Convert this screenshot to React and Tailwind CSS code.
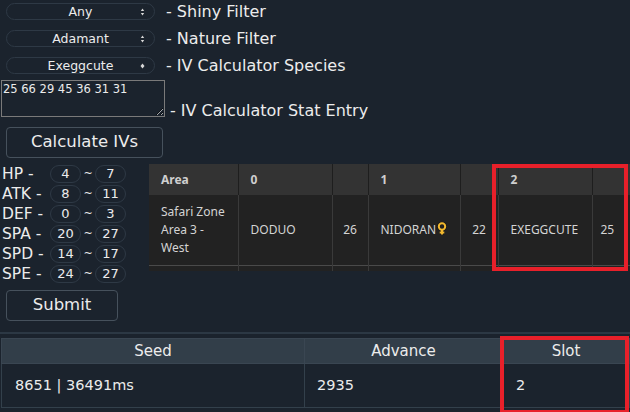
import React from "react"

const ui = "font-['DejaVu_Sans',sans-serif]"
const tbl = "font-['Noto_Sans',sans-serif]"

function Arrows({ dot }) {
    if (dot) {
        return (
            <svg width="5" height="8" viewBox="0 0 5 8" className="absolute right-[9px] top-[4px]">
                <path d="M2.5 1.5 L4.5 4 L2.5 6.5 L0.5 4 Z" fill="#d8d8d8" />
            </svg>
        )
    }
    return (
        <svg width="5" height="8" viewBox="0 0 5 8" className="absolute right-[9px] top-[4px]">
            <path d="M2.5 0.5 L4.2 3 L0.8 3 Z" fill="#d8d8d8" />
            <path d="M2.5 7.5 L4.2 5 L0.8 5 Z" fill="#d8d8d8" />
        </svg>
    )
}

function FemaleIcon() {
    return (
        <svg width="10" height="14" viewBox="0 0 10 14" className="inline-block align-[-2px] ml-[1px]">
            <circle cx="5" cy="4.5" r="3.4" fill="none" stroke="#1a1a1a" strokeWidth="3.4" />
            <path d="M5 8 V13 M2.5 10.5 H7.5" stroke="#1a1a1a" strokeWidth="3.4" />
            <circle cx="5" cy="4.5" r="3.2" fill="none" stroke="#f2b82e" strokeWidth="2" />
            <path d="M5 7.5 V12.6 M2.7 10.5 H7.3" stroke="#f2b82e" strokeWidth="2" />
        </svg>
    )
}

function FilterRow({ value, label, dot, first }) {
    return (
        <div className={"flex items-center h-[17px] ml-[6px] " + (first ? "" : "mt-[10px]")}>
            <div className="relative w-[149px] h-[17px] rounded-full border border-[#2e3945] text-[12.5px] leading-[15px] text-center">
                {value}
                <Arrows dot={dot} />
            </div>
            <span className="ml-[11px] text-[16px] leading-[18px]">{label}</span>
        </div>
    )
}

function StatRow({ name, lo, hi }) {
    return (
        <div className="flex items-center h-[20px]">
            <span className="w-[48px] text-[15.5px] leading-[18px]">{name} -</span>
            <span className="w-[31px] h-[18px] rounded-full border border-[#2e3945] text-[13px] leading-[16px] text-center">{lo}</span>
            <span className="w-[14px] text-center text-[11px] leading-[14px]">~</span>
            <span className="w-[31px] h-[18px] rounded-full border border-[#2e3945] text-[13px] leading-[16px] text-center">{hi}</span>
        </div>
    )
}

export default function App() {
    const stats = [
        ["HP", 4, 7],
        ["ATK", 8, 11],
        ["DEF", 0, 3],
        ["SPA", 20, 27],
        ["SPD", 14, 17],
        ["SPE", 24, 27],
    ]

    return (
        <div className={"min-h-screen bg-[#1b232d] text-[#ececec] overflow-hidden " + ui}>
            <div className="pt-[3px]">
                <FilterRow first value="Any" label="- Shiny Filter" />
                <FilterRow value="Adamant" label="- Nature Filter" />
                <FilterRow value="Exeggcute" label="- IV Calculator Species" dot />

                <div className="flex items-end mt-[6px] ml-[1px]">
                    <textarea
                        readOnly
                        defaultValue="25 66 29 45 36 31 31"
                        className="w-[164px] h-[37px] bg-[#1b232d] border border-[#7a7a7a] text-[11.5px] leading-[16px] px-[1px] py-0 text-[#ececec] outline-none resize-y"
                    />
                    <span className="ml-[5px] text-[16px] leading-[18px] mb-[-3px]">- IV Calculator Stat Entry</span>
                </div>

                <button className="ml-[6px] mt-[10px] w-[157px] h-[31px] rounded-[4px] border border-[#46515c] text-[16.5px]">
                    Calculate IVs
                </button>

                <div className="flex mt-[6px]">
                    <div className="w-[149px] shrink-0 pl-[2px]">
                        {stats.map(([n, lo, hi]) => (
                            <StatRow key={n} name={n} lo={lo} hi={hi} />
                        ))}
                        <button className="ml-[4px] mt-[6px] w-[112px] h-[31px] rounded-[4px] border border-[#46515c] text-[16.5px]">
                            Submit
                        </button>
                    </div>

                    <div className="relative flex-1 min-w-0">
                        <div className={"h-[107px] overflow-hidden " + tbl}>
                            <table className="table-fixed border-collapse w-[530px] text-[12px] text-[#d4d4d4]">
                                <colgroup>
                                    <col className="w-[89px]" />
                                    <col className="w-[94px]" />
                                    <col className="w-[36px]" />
                                    <col className="w-[92px]" />
                                    <col className="w-[38px]" />
                                    <col className="w-[94px]" />
                                    <col className="w-[87px]" />
                                </colgroup>
                                <thead>
                                    <tr className="bg-[#333333] h-[31px] font-bold text-[#cfcfcf]">
                                        <th className="text-left pl-[12px] border-r border-[#1e1e1e]">Area</th>
                                        <th className="text-left pl-[12px] border-r border-[#1e1e1e]">0</th>
                                        <th className="border-r border-[#1e1e1e]"></th>
                                        <th className="text-left pl-[12px] border-r border-[#1e1e1e]">1</th>
                                        <th className="border-r border-[#1e1e1e]"></th>
                                        <th className="text-left pl-[12px] border-r border-[#1e1e1e]">2</th>
                                        <th></th>
                                    </tr>
                                </thead>
                                <tbody>
                                    <tr className="bg-[#222222] h-[70px] border-b border-[#4a4a4a]">
                                        <td className="pl-[12px] pr-[6px] leading-[18px] border-r border-[#3a3a3a]">Safari Zone Area 3 - West</td>
                                        <td className="pl-[12px] border-r border-[#3a3a3a]">DODUO</td>
                                        <td className="text-center border-r border-[#3a3a3a]">26</td>
                                        <td className="pl-[12px] border-r border-[#3a3a3a] whitespace-nowrap">
                                            NIDORAN<FemaleIcon />
                                        </td>
                                        <td className="text-center border-r border-[#3a3a3a]">22</td>
                                        <td className="pl-[12px] border-r border-[#3a3a3a]">EXEGGCUTE</td>
                                        <td className="pl-[8px]">25</td>
                                    </tr>
                                    <tr className="bg-[#222222] h-[40px]">
                                        <td className="border-r border-[#3a3a3a]"></td>
                                        <td className="border-r border-[#3a3a3a]"></td>
                                        <td className="border-r border-[#3a3a3a]"></td>
                                        <td className="border-r border-[#3a3a3a]"></td>
                                        <td className="border-r border-[#3a3a3a]"></td>
                                        <td className="border-r border-[#3a3a3a]"></td>
                                        <td></td>
                                    </tr>
                                </tbody>
                            </table>
                        </div>
                        <div className="absolute left-[343px] top-0 w-[136px] h-[107px] border-4 border-[#e8202a]"></div>
                    </div>
                </div>

                <div className="relative mt-[11px] border-t-2 border-[#2c3844] pt-[4px] pl-[1px]">
                    <table className="table-fixed border-collapse w-[628px]">
                        <colgroup>
                            <col className="w-[303px]" />
                            <col className="w-[198px]" />
                            <col className="w-[127px]" />
                        </colgroup>
                        <thead>
                            <tr className="bg-[#323e49] h-[25px] text-[15px]">
                                <th className="border border-[#3a4652] font-normal">Seed</th>
                                <th className="border border-[#3a4652] font-normal">Advance</th>
                                <th className="border border-[#3a4652] font-normal">Slot</th>
                            </tr>
                        </thead>
                        <tbody>
                            <tr className="h-[44px] text-[14.5px]">
                                <td className="pl-[13px] border border-[#33404b]">8651 | 36491ms</td>
                                <td className="pl-[12px] border border-[#33404b]">2935</td>
                                <td className="pl-[13px] border border-[#33404b]">2</td>
                            </tr>
                        </tbody>
                    </table>
                    <div className="absolute left-[500px] top-[2px] w-[129px] h-[78px] border-4 border-[#e8202a]"></div>
                </div>
            </div>
        </div>
    )
}
